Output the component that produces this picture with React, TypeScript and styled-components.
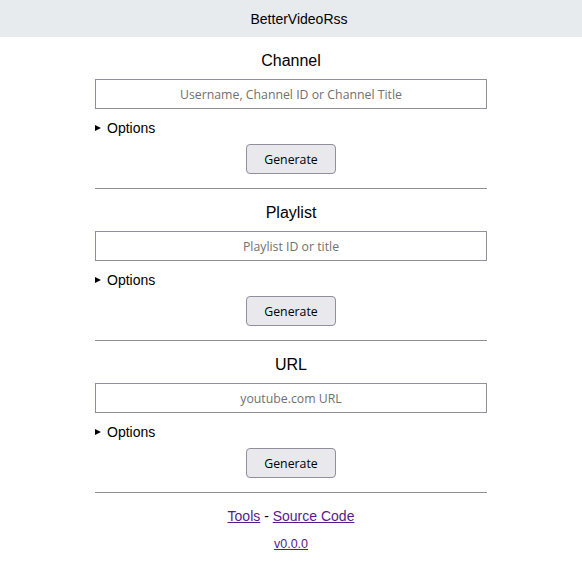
import { FunctionComponent } from 'react';
import styled, { createGlobalStyle } from 'styled-components';

const GlobalStyle = createGlobalStyle`
  body {
    margin: 0;
    background: #fff;
    color: #000;
    font-family: 'Liberation Sans', Arial, sans-serif;
  }
`;

interface SectionProps {
  title: string;
  placeholder: string;
}

const Section: FunctionComponent<SectionProps> = ({ title, placeholder }) => {
  return (
    <Block>
      <Heading>{title}</Heading>
      <Input placeholder={placeholder} />
      <Options>
        <Summary>Options</Summary>
      </Options>
      <ButtonRow>
        <Button>Generate</Button>
      </ButtonRow>
      <Rule />
    </Block>
  );
};

const App = () => {
  return (
    <>
      <GlobalStyle />
      <Header>BetterVideoRss</Header>
      <Main>
        <Section title="Channel" placeholder="Username, Channel ID or Channel Title" />
        <Section title="Playlist" placeholder="Playlist ID or title" />
        <Section title="URL" placeholder="youtube.com URL" />
        <Footer>
          <Links>
            <a href="#tools">Tools</a> - <a href="#source">Source Code</a>
          </Links>
          <Version>
            <a href="#version">v0.0.0</a>
          </Version>
        </Footer>
      </Main>
    </>
  );
};

const Header = styled.header`
  box-sizing: border-box;
  height: 37px;
  display: flex;
  align-items: center;
  justify-content: center;
  padding-left: 16px;
  background: #e8ebee;
  font-size: 14px;
`;

const Main = styled.main`
  width: 392px;
  margin: 0 auto;
  padding-top: 14px;
`;

const Block = styled.section`
  display: flex;
  flex-direction: column;
  margin-bottom: 14px;
`;

const Heading = styled.h2`
  margin: 0 0 9px;
  padding-top: 1px;
  font-size: 16px;
  line-height: 18px;
  font-weight: 400;
  text-align: center;
`;

const Input = styled.input`
  box-sizing: border-box;
  width: 100%;
  height: 30px;
  margin: 0;
  padding: 0 8px;
  border: 1px solid #8f8f9d;
  border-radius: 0;
  background: #fff;
  font-family: 'Open Sans', sans-serif;
  font-size: 12.3px;
  text-align: center;
  outline: none;

  &::placeholder {
    color: #707070;
  }
`;

const Options = styled.details`
  margin-top: 11px;
  font-size: 14px;
  line-height: 16px;
`;

const Summary = styled.summary`
  display: flex;
  align-items: center;
  list-style: none;
  cursor: pointer;

  &::-webkit-details-marker {
    display: none;
  }

  &::before {
    content: '';
    width: 0;
    height: 0;
    margin-right: 6px;
    border-top: 3.5px solid transparent;
    border-bottom: 3.5px solid transparent;
    border-left: 6px solid #000;
  }
`;

const ButtonRow = styled.div`
  display: flex;
  justify-content: center;
  margin-top: 8px;
`;

const Button = styled.button`
  box-sizing: border-box;
  width: 90px;
  height: 30px;
  border: 1px solid #8f8f9d;
  border-radius: 4px;
  background: #e9e9ed;
  color: #000;
  font-family: 'Open Sans', sans-serif;
  font-size: 12.3px;
  cursor: pointer;
`;

const Rule = styled.hr`
  width: 100%;
  margin: 14px 0 0;
  border: none;
  border-top: 1px solid #8f8f9d;
`;

const Footer = styled.footer`
  display: flex;
  flex-direction: column;
  align-items: center;
  padding-top: 1px;
  font-size: 14px;

  a {
    color: #551a8b;
  }
`;

const Links = styled.div`
  line-height: 16px;
`;

const Version = styled.div`
  margin-top: 12px;
  font-size: 12.5px;
  line-height: 16px;
`;

export default App;
